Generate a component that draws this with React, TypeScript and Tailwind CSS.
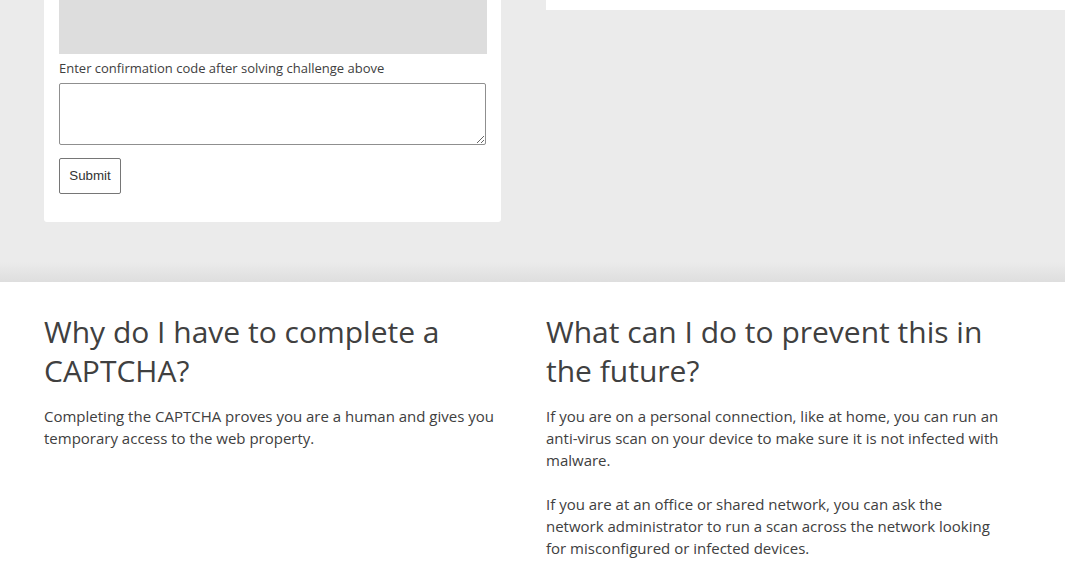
import React from 'react';

const font = "font-['Open_Sans','Noto_Sans',sans-serif]";

export default function App() {
  return (
    <div className={`min-h-[577px] bg-white text-[#404040] ${font}`}>
      <section className="bg-[linear-gradient(to_bottom,#ebebeb_calc(100%-20px),#dedede)] pb-[60px]">
        <div className="flex items-start gap-[45px] pl-[44px]">
          <div className="w-[457px] shrink-0 rounded-b-[3px] bg-white px-[15px] pb-[28px]">
            <div className="h-[54px] w-[428px] bg-[#dddddd]" />
            <label className="mt-[5px] block text-[13px] leading-[18px]">
              Enter confirmation code after solving challenge above
            </label>
            <textarea className="mt-[6px] block h-[62px] w-[427px] rounded-[2px] border border-[#8f8f8f] bg-white" />
            <button
              type="button"
              className="mt-[13px] h-[36px] w-[62px] rounded-[2px] border border-[#767676] bg-white font-['Liberation_Sans',Arial,sans-serif] text-[13.33px] text-[#333333]"
            >
              Submit
            </button>
          </div>
          <div className="h-[10px] flex-1 bg-white" />
        </div>
      </section>

      <section className="pt-[30px] pb-[20px]">
        <div className="flex gap-[45px] pl-[44px]">
          <div className="w-[457px] shrink-0">
            <h2 className="text-[30px] font-normal leading-[39px]">Why do I have to complete a CAPTCHA?</h2>
            <p className="mt-[15px] text-[15px] leading-[22px]">
              Completing the CAPTCHA proves you are a human and gives you temporary access to the web property.
            </p>
          </div>
          <div className="w-[457px] shrink-0">
            <h2 className="text-[30px] font-normal leading-[39px]">What can I do to prevent this in the future?</h2>
            <p className="mt-[15px] text-[15px] leading-[22px]">
              If you are on a personal connection, like at home, you can run an anti-virus scan on your device to make sure it is not infected with malware.
            </p>
            <p className="mt-[22px] text-[15px] leading-[22px]">
              If you are at an office or shared network, you can ask the network administrator to run a scan across the network looking for misconfigured or infected devices.
            </p>
          </div>
        </div>
      </section>
    </div>
  );
}
